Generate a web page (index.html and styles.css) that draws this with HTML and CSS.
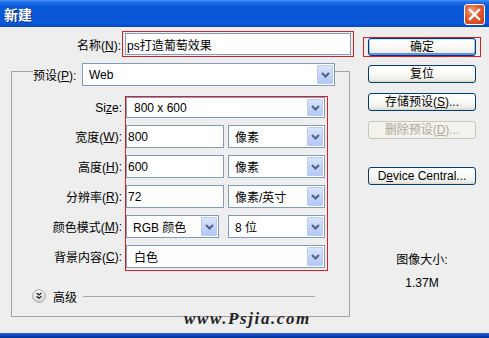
FILE: index.html
```html
<!DOCTYPE html>
<html lang="zh-CN">
<head>
    <meta charset="UTF-8">
    <title>新建</title>
    <link rel="stylesheet" href="styles.css">
</head>
<body>
    <div class="window">
        <!-- title bar -->
        <div class="titlebar">
            <span class="title">新建</span>
            <button class="close" type="button">
                <svg width="13" height="13" viewBox="0 0 13 13"><path d="M2 2 L11 11 M11 2 L2 11" stroke="#fff" stroke-width="2.4" stroke-linecap="square"/></svg>
            </button>
        </div>

        <div class="dialog">
            <div class="main">
                <div class="name-row">
                    <label class="lbl-name">名称(<u>N</u>):</label>
                    <div class="mark name-mark">
                        <input class="field name-field" type="text" value="ps打造葡萄效果">
                    </div>
                </div>

                <fieldset class="group">
                    <legend>
                        <div class="preset-row">
                            <label class="lbl-preset">预设(<u>P</u>):</label>
                            <div class="combo preset">
                                <span class="value">Web</span>
                                <span class="arrow"><svg width="9" height="6" viewBox="0 0 9 6"><path d="M1 1 L4.5 4.5 L8 1" fill="none" stroke="#4d6185" stroke-width="2"/></svg></span>
                            </div>
                        </div>
                    </legend>

                    <div class="form">
                        <div class="labels">
                            <span>Si<u>z</u>e:</span>
                            <span>宽度(<u>W</u>):</span>
                            <span>高度(<u>H</u>):</span>
                            <span>分辨率(<u>R</u>):</span>
                            <span>颜色模式(<u>M</u>):</span>
                            <span>背景内容(<u>C</u>):</span>
                        </div>
                        <div class="mark fields">
                            <div class="combo wide">
                                <span class="value">800 x 600</span>
                                <span class="arrow"><svg width="9" height="6" viewBox="0 0 9 6"><path d="M1 1 L4.5 4.5 L8 1" fill="none" stroke="#4d6185" stroke-width="2"/></svg></span>
                            </div>
                            <input class="field" type="text" value="800">
                            <div class="combo">
                                <span class="value">像素</span>
                                <span class="arrow"><svg width="9" height="6" viewBox="0 0 9 6"><path d="M1 1 L4.5 4.5 L8 1" fill="none" stroke="#4d6185" stroke-width="2"/></svg></span>
                            </div>
                            <input class="field" type="text" value="600">
                            <div class="combo">
                                <span class="value">像素</span>
                                <span class="arrow"><svg width="9" height="6" viewBox="0 0 9 6"><path d="M1 1 L4.5 4.5 L8 1" fill="none" stroke="#4d6185" stroke-width="2"/></svg></span>
                            </div>
                            <input class="field" type="text" value="72">
                            <div class="combo">
                                <span class="value">像素/英寸</span>
                                <span class="arrow"><svg width="9" height="6" viewBox="0 0 9 6"><path d="M1 1 L4.5 4.5 L8 1" fill="none" stroke="#4d6185" stroke-width="2"/></svg></span>
                            </div>
                            <div class="combo mode">
                                <span class="value">RGB 颜色</span>
                                <span class="arrow"><svg width="9" height="6" viewBox="0 0 9 6"><path d="M1 1 L4.5 4.5 L8 1" fill="none" stroke="#4d6185" stroke-width="2"/></svg></span>
                            </div>
                            <div class="combo">
                                <span class="value">8 位</span>
                                <span class="arrow"><svg width="9" height="6" viewBox="0 0 9 6"><path d="M1 1 L4.5 4.5 L8 1" fill="none" stroke="#4d6185" stroke-width="2"/></svg></span>
                            </div>
                            <div class="combo wide">
                                <span class="value">白色</span>
                                <span class="arrow"><svg width="9" height="6" viewBox="0 0 9 6"><path d="M1 1 L4.5 4.5 L8 1" fill="none" stroke="#4d6185" stroke-width="2"/></svg></span>
                            </div>
                        </div>
                    </div>

                    <!-- advanced -->
                    <div class="advanced">
                        <svg class="expander" width="14" height="14" viewBox="0 0 14 14">
                            <defs>
                                <linearGradient id="ball" x1="0" y1="0" x2="0" y2="1">
                                    <stop offset="0" stop-color="#ffffff"/>
                                    <stop offset="1" stop-color="#d4d4d4"/>
                                </linearGradient>
                            </defs>
                            <circle cx="7" cy="7" r="6.3" fill="url(#ball)" stroke="#a4a4a4"/>
                            <path d="M4.6 4 L7 6 L9.4 4 M4.6 7.2 L7 9.2 L9.4 7.2" fill="none" stroke="#222" stroke-width="1.3"/>
                        </svg>
                        <span>高级</span>
                        <span class="rule"></span>
                    </div>
                </fieldset>
            </div>

            <div class="side">
                <div class="mark ok-mark">
                    <button class="btn default" type="button">确定</button>
                </div>
                <button class="btn reset" type="button">复位</button>
                <button class="btn save" type="button">存储预设(<u>S</u>)...</button>
                <button class="btn delete" type="button" disabled>删除预设(<u>D</u>)...</button>
                <button class="btn device" type="button">D<u>e</u>vice Central...</button>
                <div class="info">
                    <div>图像大小:</div>
                    <div>1.37M</div>
                </div>
            </div>
        </div>

        <div class="watermark">www.Psjia.com</div>
        <div class="frame-bottom"></div>
    </div>
</body>
</html>
```

FILE: styles.css
```css
* {
    box-sizing: border-box;
}

body {
    margin: 0;
    font-family: "Liberation Sans", "Noto Sans CJK SC", sans-serif;
    font-size: 12px;
    color: #000;
    background: #eeeeee;
}

u {
    text-decoration: underline;
    text-underline-offset: 1px;
}

.window {
    position: relative;
    width: 489px;
    height: 338px;
    display: flex;
    flex-direction: column;
    overflow: hidden;
    background: #eeeeee;
}

/* title bar */
.titlebar {
    height: 27px;
    flex: none;
    display: flex;
    align-items: center;
    justify-content: space-between;
    padding: 0 4px 0 4px;
    background: linear-gradient(180deg, #4a94f6 0px, #2170e6 2px, #0b5ad9 6px, #0856d5 18px, #0a5bdb 23px, #0846b9 27px);
}

.title {
    color: #fff;
    font-weight: bold;
    font-size: 14px;
    text-shadow: 1px 1px 0 #0a2a86;
}

.close {
    width: 21px;
    height: 21px;
    margin-top: 1px;
    padding: 0;
    display: flex;
    align-items: center;
    justify-content: center;
    border: 1px solid #fff;
    border-radius: 3px;
    background: radial-gradient(circle at 35% 30%, #f39a78 0%, #e2582c 45%, #c8401f 100%);
}

/* dialog body */
.dialog {
    flex: 1;
    display: flex;
    padding-left: 11px;
}

.main {
    width: 343px;
    padding-top: 4px;
}

.mark {
    border: 1px solid #d1222a;
}

.name-row {
    display: flex;
    align-items: center;
}

.lbl-name {
    width: 110px;
    text-align: right;
}

.name-mark {
    margin-left: 1px;
    padding: 1px 2px;
}

.field {
    display: block;
    height: 23px;
    margin: 0;
    padding: 0 1px;
    border: 1px solid #7f9db9;
    background: #fff;
    font: inherit;
    color: #000;
    outline: none;
}

.name-field {
    width: 226px;
    height: 22px;
}

/* group box */
.group {
    width: 339px;
    margin: 0;
    padding: 0 0 13px;
    min-width: 0;
    border: 1px solid #a3a3a3;
}

.group legend {
    margin-left: 21px;
    padding: 6px 0 0;
}

.preset-row {
    display: flex;
    align-items: center;
}

.lbl-preset {
    width: 49px;
}

.combo {
    display: flex;
    align-items: center;
    height: 23px;
    padding: 1px;
    border: 1px solid #7f9db9;
    background: #fff;
}

.combo .value {
    flex: 1;
    padding-left: 5px;
    white-space: nowrap;
}

.combo .arrow {
    width: 16px;
    height: 100%;
    display: flex;
    align-items: center;
    justify-content: center;
    border: 1px solid #b9cbf3;
    border-radius: 1px;
    background: linear-gradient(180deg, #dbe5fc 0%, #c5d5fa 50%, #b4c8f6 100%);
}

.preset {
    width: 253px;
}

/* size rows */
.form {
    display: flex;
    margin-top: 10px;
}

.labels {
    width: 110px;
    margin-top: 1px;
    display: grid;
    grid-template-rows: 21px repeat(5, 23px);
    row-gap: 7px;
}

.labels span {
    display: flex;
    align-items: center;
    justify-content: flex-end;
}

.fields {
    margin-left: 3px;
    padding: 0 2px 2px 0;
    display: grid;
    grid-template-columns: 98px 97px;
    grid-template-rows: 21px repeat(5, 23px);
    gap: 7px 4px;
}

.fields .field {
    width: 98px;
}

.fields .combo {
    height: 100%;
}

.fields .wide {
    grid-column: 1 / 3;
}

.fields .wide .value {
    padding-left: 6px;
}

.fields .mode {
    width: 93px;
}

/* advanced */
.advanced {
    display: flex;
    align-items: center;
    gap: 7px;
    height: 14px;
    margin: 18px 34px 0 20px;
}

.advanced .rule {
    flex: 1;
    height: 1px;
    background: #a8a8a8;
    margin-left: -1px;
}

/* buttons */
.side {
    width: 108px;
    margin-left: 14px;
    padding-top: 10px;
    display: flex;
    flex-direction: column;
}

.btn {
    height: 18px;
    width: 108px;
    padding: 0;
    border: 1px solid #003c74;
    border-radius: 3px;
    background: linear-gradient(180deg, #ffffff 0%, #fbfbf9 40%, #f0f0ea 80%, #dcd9cf 100%);
    font: inherit;
    color: #000;
    line-height: 16px;
    text-align: center;
}

.ok-mark {
    margin: 0 -5px;
    padding: 0 4px;
}

.btn.default {
    box-shadow: inset 0 1px 0 #cde4ff, inset 0 -2px 0 #6c8ee0, inset 1px 0 0 #a7c6f5, inset -1px 0 0 #a7c6f5;
}

.reset {
    margin-top: 8px;
}

.save,
.delete {
    margin-top: 10px;
}

.delete {
    border-color: #c9c7ba;
    background: #f3f2ec;
    color: #aca899;
}

.device {
    margin-top: 28px;
}

.info {
    margin-top: 64px;
    line-height: 23px;
    text-align: center;
}

.watermark {
    position: absolute;
    left: 184px;
    top: 309px;
    font-family: "Liberation Serif", serif;
    font-style: italic;
    font-weight: bold;
    font-size: 17px;
    letter-spacing: 1.6px;
    color: #222;
}

.frame-bottom {
    height: 5px;
    flex: none;
    background: linear-gradient(180deg, #2a68e0 0%, #0b43c0 50%, #002a8e 100%);
}
```
